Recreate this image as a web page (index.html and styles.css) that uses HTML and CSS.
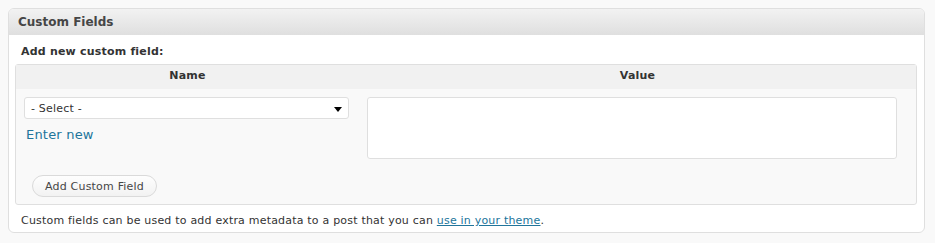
FILE: index.html
```html
<!DOCTYPE html>
<html>
<head>
<meta charset="utf-8">
<link rel="stylesheet" href="styles.css">
</head>
<body>
<div class="postbox">
  <h3 class="hndle">Custom Fields</h3>
  <div class="inside">
    <p class="label"><strong>Add new custom field:</strong></p>
    <div class="meta">
      <div class="meta-head">
        <div class="th">Name</div>
        <div class="th">Value</div>
      </div>
      <div class="meta-body">
        <div class="name-cell">
          <div class="select-wrap">
            <select class="select"><option>- Select -</option></select>
            <svg class="arrow" width="8" height="5" viewBox="0 0 8 5"><path d="M0 0H8L4 5Z" fill="#000"/></svg>
          </div>
          <a class="enter-new" href="#">Enter new</a>
        </div>
        <div class="value-cell">
          <textarea class="value"></textarea>
        </div>
      </div>
      <div class="meta-submit">
        <button class="button" type="button">Add Custom Field</button>
      </div>
    </div>
    <p class="note">Custom fields can be used to add extra metadata to a post that you can <a href="#">use in your theme</a>.</p>
  </div>
</div>
</body>
</html>
```

FILE: styles.css
```css
html, body {
  margin: 0;
  padding: 0;
  background: #f9f9f9;
}
body {
  padding: 8px 0 0 8px;
  font-family: "DejaVu Sans", Verdana, sans-serif;
  font-size: 11px;
  color: #333;
  letter-spacing: 0.2px;
}
.postbox {
  width: 915px;
  border: 1px solid #dfdfdf;
  border-radius: 6px;
  background: #fff;
  overflow: hidden;
}
.hndle {
  margin: 0;
  height: 26px;
  line-height: 27px;
  padding-left: 9px;
  font-size: 12px;
  font-weight: bold;
  color: #464646;
  letter-spacing: 0;
  background: linear-gradient(#f2f2f2, #dfdfdf);
}
.inside {
  padding: 0 7px 0 6px;
}
.label {
  margin: 0;
  padding: 9px 0 4px 6px;
  line-height: 16px;
  font-size: 11px;
}
.meta {
  border: 1px solid #dfdfdf;
  border-radius: 3px;
  background: #f9f9f9;
}
.meta-head {
  display: grid;
  grid-template-columns: 343px 1fr;
  background: #f1f1f1;
  height: 24px;
}
.th {
  text-align: center;
  font-weight: bold;
  line-height: 21px;
}
.meta-body {
  display: grid;
  grid-template-columns: 343px 1fr;
  padding-top: 8px;
}
.name-cell {
  padding: 0 11px 0 8px;
}
.select-wrap {
  position: relative;
}
.select {
  display: block;
  width: 325px;
  height: 22px;
  margin: 0;
  padding: 0 6px;
  border: 1px solid #dfdfdf;
  border-radius: 3px;
  background: #fff;
  font-family: "DejaVu Sans", Verdana, sans-serif;
  font-size: 11px;
  letter-spacing: 0.2px;
  color: #333;
  appearance: none;
  -webkit-appearance: none;
}
.arrow {
  position: absolute;
  left: 310px;
  top: 10px;
}
.enter-new {
  display: block;
  margin: 7px 0 0 2px;
  line-height: 18px;
  font-size: 13px;
  color: #21759b;
  text-decoration: none;
}
.value-cell {
  padding: 0 20px 0 8px;
}
.value {
  display: block;
  width: 530px;
  height: 62px;
  margin: 0;
  padding: 0;
  border: 1px solid #dfdfdf;
  border-radius: 3px;
  background: #fff;
  resize: none;
  box-sizing: border-box;
}
.meta-submit {
  padding: 16px 0 7px 16px;
}
.button {
  display: block;
  height: 22px;
  padding: 0 12px;
  border: 1px solid #dadada;
  border-radius: 11px;
  background: linear-gradient(#fefefe, #f2f2f2);
  font-family: "DejaVu Sans", Verdana, sans-serif;
  font-size: 11px;
  letter-spacing: 0.2px;
  color: #464646;
}
.note {
  margin: 0;
  padding: 8px 0 3px 6px;
  line-height: 16px;
}
.note a {
  color: #21759b;
}
```
